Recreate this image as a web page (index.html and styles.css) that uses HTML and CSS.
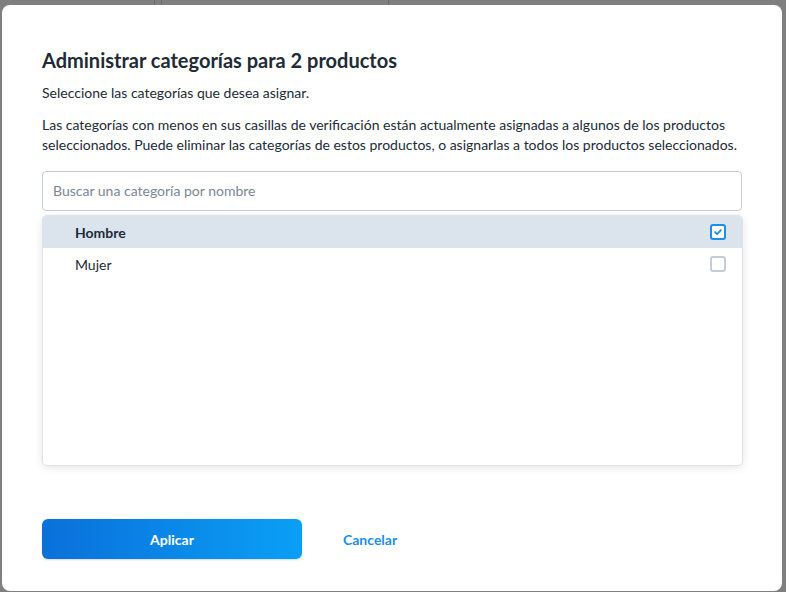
FILE: index.html
```html
<!DOCTYPE html>
<html lang="es">
<head>
    <meta charset="UTF-8">
    <meta name="viewport" content="width=device-width, initial-scale=1.0">
    <title>Administrar categorías</title>
    <link rel="stylesheet" href="styles.css">
</head>
<body>

    <!-- Fondo de la página detrás del modal -->
    <div class="backdrop">
        <span class="bg-line bg-line-1"></span>
        <span class="bg-line bg-line-2"></span>
        <span class="bg-line bg-line-3"></span>
    </div>

    <div class="modal">
        <h1 class="modal-title">Administrar categorías para 2 productos</h1>
        <p class="modal-text">Seleccione las categorías que desea asignar.</p>
        <p class="modal-text modal-help">Las categorías con menos en sus casillas de verificación están actualmente asignadas a algunos de los productos seleccionados. Puede eliminar las categorías de estos productos, o asignarlas a todos los productos seleccionados.</p>

        <input class="search" type="text" placeholder="Buscar una categoría por nombre">

        <ul class="category-list">
            <li class="category active">
                <span class="category-name">Hombre</span>
                <span class="checkbox checked">
                    <svg viewBox="0 0 16 16"><path d="M4 8.2 6.8 10.8 11.8 5.4"></path></svg>
                </span>
            </li>
            <li class="category">
                <span class="category-name">Mujer</span>
                <span class="checkbox"></span>
            </li>
        </ul>

        <div class="actions">
            <button class="btn-primary">Aplicar</button>
            <button class="btn-link">Cancelar</button>
        </div>
    </div>

</body>
</html>
```

FILE: styles.css
```css
body {
    margin: 0;
    font-family: 'Lato', 'Noto Sans', sans-serif;
    background-color: #7f7f7f;
    color: #212b36;
    height: 592px;
    overflow: hidden;
    position: relative;
}

/* Backdrop */
.backdrop {
    position: absolute;
    inset: 0;
}

.bg-line {
    position: absolute;
    top: 0;
    width: 1px;
    height: 6px;
    background-color: #6a6a6a;
}

.bg-line-1 { left: 154px; }
.bg-line-2 { left: 161px; }
.bg-line-3 { left: 388px; }

/* Modal */
.modal {
    position: relative;
    margin: 5px 4px 0 2px;
    height: 586px;
    box-sizing: border-box;
    background-color: #ffffff;
    border-radius: 8px;
    padding: 43px 40px 0 40px;
}

.modal-title {
    margin: 0 0 11px 0;
    font-size: 20px;
    line-height: 24px;
    font-weight: 700;
    color: #212b36;
}

.modal-text {
    margin: 0;
    font-size: 14px;
    line-height: 20px;
    color: #212b36;
}

.modal-help {
    margin-top: 12px;
}

.search {
    display: block;
    width: 100%;
    height: 40px;
    box-sizing: border-box;
    margin-top: 16px;
    padding: 0 10px 1px 10px;
    border: 1px solid #c4cdd5;
    border-radius: 4px;
    font-family: inherit;
    font-size: 14px;
    color: #212b36;
    outline: none;
}

.search::placeholder {
    color: #7b8794;
}

/* Category list */
.category-list {
    list-style: none;
    margin: 5px 0 0 1px;
    padding: 0;
    height: 249px;
    border-radius: 4px;
    box-shadow: 0 0 0 1px #dfe3e8, 0 2px 10px rgba(0, 0, 0, 0.12);
    overflow: hidden;
}

.category {
    display: flex;
    align-items: center;
    justify-content: space-between;
    height: 32px;
    padding: 0 16px 0 32px;
    font-size: 14px;
}

.category.active {
    background-color: #dbe3ec;
}

.category.active .category-name {
    font-weight: 700;
}

.checkbox {
    width: 16px;
    height: 16px;
    box-sizing: border-box;
    border: 2px solid #c4cdd5;
    border-radius: 3px;
    background-color: #ffffff;
    display: flex;
}

.checkbox.checked {
    border-color: #1b8fea;
}

.checkbox svg {
    width: 100%;
    height: 100%;
}

.checkbox svg path {
    fill: none;
    stroke: #1b8fea;
    stroke-width: 2.4;
    stroke-linecap: round;
    stroke-linejoin: round;
}

/* Buttons */
.actions {
    display: flex;
    align-items: center;
    gap: 41px;
    margin-top: 54px;
}

.btn-primary {
    width: 260px;
    height: 40px;
    border: none;
    border-radius: 6px;
    background: linear-gradient(90deg, #0a70da, #0a9ff6);
    color: #ffffff;
    font-family: inherit;
    font-size: 14px;
    font-weight: 700;
    box-shadow: 0 1px 2px rgba(0, 0, 0, 0.15);
}

.btn-link {
    border: none;
    background: none;
    padding: 0;
    color: #1b8fea;
    font-family: inherit;
    font-size: 14px;
    font-weight: 700;
}
```
